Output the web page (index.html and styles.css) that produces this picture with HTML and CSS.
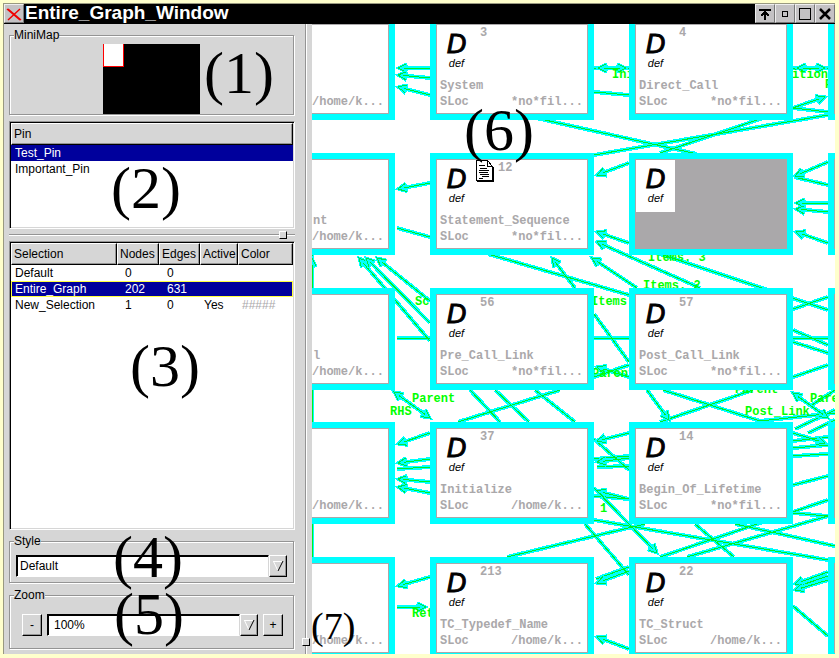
FILE: index.html
```html
<!DOCTYPE html>
<html lang="en">
<head>
<meta charset="utf-8">
<title>Entire_Graph_Window</title>
<link rel="stylesheet" href="styles.css">
</head>
<body>
<div class="window">
  <header class="titlebar">
    <button class="wm-button" aria-label="Window menu"><svg width="16" height="16" viewBox="0 0 16 16"><path d="M1 3L14 14M2 3L15 14M14 3L2 14" stroke="#f00000" stroke-width="1.5" fill="none"/></svg></button>
    <h1 class="title">Entire_Graph_Window</h1>
    <button class="wm-button" aria-label="Shade"><svg width="16" height="16" viewBox="0 0 16 16" shape-rendering="crispEdges"><path d="M2 4H14M8 4V14" stroke="#000" stroke-width="2" fill="none"/><path d="M4 10L8 6L12 10" stroke="#000" stroke-width="2" fill="none"/></svg></button>
    <button class="wm-button" aria-label="Minimize"><svg width="16" height="16" viewBox="0 0 16 16" shape-rendering="crispEdges"><path d="M5.500 5.500h5v5h-5z" stroke="#000" fill="none"/></svg></button>
    <button class="wm-button" aria-label="Maximize"><svg width="16" height="16" viewBox="0 0 16 16" shape-rendering="crispEdges"><path d="M2.500 2.500h11v11h-11z" stroke="#000" fill="none"/></svg></button>
    <button class="wm-button" aria-label="Close"><svg width="16" height="16" viewBox="0 0 16 16"><path d="M3 3L13 13M13 3L3 13" stroke="#000" stroke-width="2.500" fill="none"/></svg></button>
  </header>

  <div class="content">
    <aside class="sidebar">
      <fieldset class="group">
        <legend>MiniMap</legend>
        <div class="minimap"><div class="minimap-view"></div></div>
      </fieldset>

      <div class="list list-pins">
        <table>
          <thead><tr><th>Pin</th></tr></thead>
          <tbody>
            <tr class="selected"><td>Test_Pin</td></tr>
            <tr><td>Important_Pin</td></tr>
          </tbody>
        </table>
      </div>

      <div class="sash"><span class="grip"></span></div>

      <div class="list list-selections">
        <table>
          <colgroup><col class="c-name"><col class="c-nodes"><col class="c-edges"><col class="c-active"><col></colgroup>
          <thead><tr><th>Selection</th><th>Nodes</th><th>Edges</th><th>Active</th><th>Color</th></tr></thead>
          <tbody>
            <tr><td>Default</td><td class="value">0</td><td class="value">0</td><td></td><td></td></tr>
            <tr class="selected focused"><td>Entire_Graph</td><td class="value">202</td><td class="value">631</td><td></td><td></td></tr>
            <tr><td>New_Selection</td><td class="value">1</td><td class="value">0</td><td>Yes</td><td class="swatch">#####</td></tr>
          </tbody>
        </table>
      </div>

      <fieldset class="group group-style">
        <legend><label for="style">Style</label></legend>
        <div class="combo">
          <select id="style"><option>Default</option></select>
          <span class="arrow"><svg width="12" height="14" viewBox="0 0 12 14"><path d="M1 2.500H11M1.500 2.500L6 12" stroke="#fff" fill="none"/><path d="M11 2L6 12" stroke="#000" fill="none"/></svg></span>
        </div>
      </fieldset>

      <fieldset class="group group-zoom">
        <legend><label for="zoom">Zoom</label></legend>
        <div class="zoom-row">
          <button class="step" aria-label="Zoom out">-</button>
          <div class="combo">
            <select id="zoom"><option>100%</option></select>
            <span class="arrow"><svg width="12" height="14" viewBox="0 0 12 14"><path d="M1 2.500H11M1.500 2.500L6 12" stroke="#fff" fill="none"/><path d="M11 2L6 12" stroke="#000" fill="none"/></svg></span>
          </div>
          <button class="step" aria-label="Zoom in">+</button>
        </div>
      </fieldset>
    </aside>

    <div class="splitter"><span class="grip"></span></div>

    <main class="canvas">
      <svg class="edges" viewBox="312 24 523 630" width="523" height="630">
        <defs>
          <marker id="head" markerUnits="userSpaceOnUse" markerWidth="20" markerHeight="20" viewBox="-14 -10 20 20" refX="0" refY="0" orient="auto-start-reverse">
            <path d="M-9 -4L-1 0L-9 4" fill="none" stroke="#00ffff" stroke-width="4"/>
            <path d="M-8 -4L0 0L-8 4" fill="none" stroke="#00e840" stroke-width="1"/>
          </marker>
          <g id="links">
            <g class="lines">
              <path d="M397 228L430 237M397 338H430M397 469L430 467M536 118L697 154M594 155L828 115M793 108L828 112"/>
              <path d="M594 68H629M793 68H828M594 92L629 95M794 177L828 185M488 254L629 295M660 254L828 310M793 309L828 297"/>
              <path d="M793 330L828 345M793 342L828 353M594 338H629M793 338H828M594 314L629 362M793 377L828 365M594 377L629 365"/>
              <path d="M470 390L500 422M495 390L529 422M535 390L575 422M458 422L560 390M663 390L760 421L835 413M660 422L753 390"/>
              <path d="M795 429L835 410M808 433L835 420M812 405L835 390"/>
              <path d="M594 439L629 470M594 459L629 456M597 467L629 466M594 496L629 499M594 520L828 560M585 524L629 575"/>
              <path d="M507 557L645 524M660 557L828 500M687 557L828 516M695 524L734 557M735 524L835 546M793 513L828 516"/>
              <path d="M793 485L828 476M793 456L828 454M793 448L828 445M793 441L828 437M793 606L828 636M312 250V560"/>
              <path d="M596 579L629 567M796 587L828 576"/>
            </g>
            <g class="arrows">
              <path d="M430 68H398"/><path d="M430 78L398 75"/><path d="M430 95L398 87"/><path d="M430 183L398 189"/>
              <path d="M430 341L359 258"/><path d="M430 323L366 258"/><path d="M430 301L377 258"/>
              <path d="M430 433L398 444"/><path d="M430 459L398 463"/><path d="M430 482L398 479"/><path d="M430 493L398 487"/>
              <path d="M430 577L398 586"/><path d="M397 607H426"/>
              <path d="M660 153L825 97"/><path d="M629 163L597 175"/><path d="M828 162L795 176"/>
              <path d="M828 203H796"/><path d="M828 212L796 209"/><path d="M828 243L796 232"/><path d="M575 288L552 258"/>
              <path d="M629 243L597 232"/><path d="M700 288L597 242"/><path d="M637 288L592 258"/><path d="M629 377L597 367"/>
              <path d="M647 390L669 420"/><path d="M629 433L597 441"/><path d="M629 458L597 462"/><path d="M629 499L597 491"/>
              <path d="M594 488L657 553"/><path d="M629 571L597 583"/><path d="M629 649L597 637"/>
              <path d="M828 572L795 584"/><path d="M828 580L795 590"/><path d="M793 433L825 443"/><path d="M312 290V258"/>
            </g>
            <g class="arrows both">
              <path d="M394 392L430 418"/><path d="M598 68H626"/><path d="M797 68H825"/><path d="M793 393L828 418"/>
            </g>
          </g>
        </defs>
        <use href="#links" class="halo"/>
        <use href="#links" class="core"/>
        <g class="edge-labels">
          <text x="612" y="78">Ini</text><text x="792" y="78">ition</text><text x="825" y="88">P</text>
          <text x="415" y="305">Sc</text><text x="648" y="261">Items. 3</text><text x="643" y="289">Items. 2</text><text x="591" y="305">Items.</text>
          <text x="592" y="377">Parent</text><text x="412" y="402">Parent</text><text x="390" y="415">RHS</text>
          <text x="735" y="393">Parent</text><text x="810" y="402">Pare</text><text x="745" y="415">Post_Link</text>
          <text x="600" y="512">1</text><text x="412" y="617">Ret</text>
        </g>
      </svg>

      <article class="node col-1 row-1"><p class="name"></p><p class="sloc"><span>/home/k...</span></p></article>
      <article class="node col-1 row-2"><p class="name">nt</p><p class="sloc"><span>/home/k...</span></p></article>
      <article class="node col-1 row-3"><p class="name">l</p><p class="sloc"><span>/home/k...</span></p></article>
      <article class="node col-1 row-4"><p class="name"></p><p class="sloc"><span>/home/k...</span></p></article>
      <article class="node col-1 row-5"><p class="name"></p><p class="sloc"><span>/home/k...</span></p></article>

      <article class="node col-2 row-1"><div class="head"><div class="kind"><b>D</b><i>def</i></div><span class="num">3</span></div><p class="name">System</p><p class="sloc"><span>SLoc</span><span>*no*fil...</span></p></article>
      <article class="node col-2 row-2"><div class="head"><div class="kind"><b>D</b><i>def</i></div><svg class="doc" width="18" height="22" viewBox="0 0 18 22" shape-rendering="crispEdges"><path d="M0.500 0.500H11.500L16.500 6.500V20.500H0.500Z" fill="#fff" stroke="#000"/><path d="M17.500 7V21.500H1" fill="none" stroke="#000"/><path d="M11.500 1V6.500H17" fill="none" stroke="#000"/><path d="M3 5.500H9M4 8.500H11M3 10.500H13M3 12.500H12M4 14.500H13M6 16.500H13M3 18.500H7" stroke="#000"/></svg><span class="num">12</span></div><p class="name">Statement_Sequence</p><p class="sloc"><span>SLoc</span><span>*no*fil...</span></p></article>
      <article class="node col-2 row-3"><div class="head"><div class="kind"><b>D</b><i>def</i></div><span class="num">56</span></div><p class="name">Pre_Call_Link</p><p class="sloc"><span>SLoc</span><span>*no*fil...</span></p></article>
      <article class="node col-2 row-4"><div class="head"><div class="kind"><b>D</b><i>def</i></div><span class="num">37</span></div><p class="name">Initialize</p><p class="sloc"><span>SLoc</span><span>/home/k...</span></p></article>
      <article class="node col-2 row-5"><div class="head"><div class="kind"><b>D</b><i>def</i></div><span class="num">213</span></div><p class="name">TC_Typedef_Name</p><p class="sloc"><span>SLoc</span><span>/home/k...</span></p></article>

      <article class="node col-3 row-1"><div class="head"><div class="kind"><b>D</b><i>def</i></div><span class="num">4</span></div><p class="name">Direct_Call</p><p class="sloc"><span>SLoc</span><span>*no*fil...</span></p></article>
      <article class="node col-3 row-2 filled"><div class="head"><div class="kind"><b>D</b><i>def</i></div></div></article>
      <article class="node col-3 row-3"><div class="head"><div class="kind"><b>D</b><i>def</i></div><span class="num">57</span></div><p class="name">Post_Call_Link</p><p class="sloc"><span>SLoc</span><span>*no*fil...</span></p></article>
      <article class="node col-3 row-4"><div class="head"><div class="kind"><b>D</b><i>def</i></div><span class="num">14</span></div><p class="name">Begin_Of_Lifetime</p><p class="sloc"><span>SLoc</span><span>*no*fil...</span></p></article>
      <article class="node col-3 row-5"><div class="head"><div class="kind"><b>D</b><i>def</i></div><span class="num">22</span></div><p class="name">TC_Struct</p><p class="sloc"><span>SLoc</span><span>/home/k...</span></p></article>

      <article class="node col-4 row-1"></article>
      <article class="node col-4 row-2"></article>
      <article class="node col-4 row-3"></article>
      <article class="node col-4 row-4"></article>
      <article class="node col-4 row-5"></article>
    </main>
  </div>
</div>

<span class="callout callout-1">(1)</span>
<span class="callout callout-2">(2)</span>
<span class="callout callout-3">(3)</span>
<span class="callout callout-4">(4)</span>
<span class="callout callout-5">(5)</span>
<span class="callout callout-6">(6)</span>
<span class="callout callout-7">(7)</span>
</body>
</html>
```
FILE: styles.css
```css
* { box-sizing: border-box; }

body {
  margin: 0;
  background: #fff;
  color: #000;
  font: 12px/16px "Liberation Sans", sans-serif;
}

p, h1 { margin: 0; }

.window {
  display: flex;
  flex-direction: column;
  height: 100vh;
  border: 3px solid #ffffcc;
  border-bottom-width: 4px;
  border-right-width: 4px;
  box-shadow: inset 1px 1px 0 #999980;
  padding: 1px 0 0 1px;
  overflow: hidden;
}

/* Title bar */
.titlebar {
  display: flex;
  flex: none;
  height: 20px;
  background: #000;
}

.title {
  flex: 1;
  padding-left: 1px;
  color: #fff;
  font-size: 19px;
  line-height: 18px;
}

.wm-button {
  display: grid;
  place-items: center;
  width: 20px;
  height: 19px;
  padding: 0;
  background: #c4c2c4;
  border: 1px solid;
  border-color: #eee #777 #777 #eee;
}

.content {
  display: flex;
  flex: 1;
  min-height: 0;
}

/* Side panel */
.sidebar {
  display: flex;
  flex: none;
  flex-direction: column;
  width: 301px;
  padding: 4px 10px 5px 5px;
  background: #d6d6d6;
}

.group {
  flex: none;
  min-width: 0;
  margin: 0 1px 0 0;
  padding: 2px 4px 0;
  border: 1px solid #949494;
  box-shadow: 1px 1px 0 #fff, inset 1px 1px 0 #fff;
}

.group legend {
  padding: 0;
  background: #d6d6d6;
  line-height: 14px;
}

.minimap {
  width: 97px;
  height: 70px;
  margin: 0 auto;
  background: #000;
}

.minimap-view {
  width: 21px;
  height: 23px;
  background: #fff;
  border: 1px solid #f00;
  border-top: 0;
}

.list {
  background: #fff;
  border: 1px solid;
  border-color: #949494 #fff #fff #949494;
  box-shadow: inset 1px 1px 0 #000, inset -1px -1px 0 #d6d6d6;
  padding: 1px;
}

.list-pins {
  flex: none;
  height: 108px;
  margin-top: 6px;
}

.list-selections { flex: 1; }

.list table {
  width: 100%;
  table-layout: fixed;
  border-spacing: 0;
}

.list th {
  height: 22px;
  padding: 0 0 0 2px;
  overflow: hidden;
  background: #d6d6d6;
  border: 1px solid;
  border-color: #fff #000 #000 #fff;
  box-shadow: inset -1px -1px 0 #949494;
  font-weight: normal;
  text-align: left;
  white-space: nowrap;
}

.list td {
  height: 16px;
  padding: 0 0 0 4px;
}

.list .value { padding-left: 8px; }

.c-name { width: 106px; }
.c-nodes { width: 42px; }
.c-edges { width: 41px; }
.c-active { width: 38px; }

.selected {
  background: #00009c;
  color: #fff;
}

.focused {
  outline: 1px solid #ffff40;
  outline-offset: -1px;
}

.list .swatch { color: #aaa8aa; }

/* Pane dividers */
.sash {
  display: flex;
  flex: none;
  align-items: center;
  justify-content: flex-end;
  height: 12px;
  padding-right: 8px;
  background: linear-gradient(#949494, #949494) 0 5px / 100% 1px no-repeat,
    linear-gradient(#fff, #fff) 0 6px / 100% 1px no-repeat;
}

.grip {
  width: 8px;
  height: 8px;
  background: #d6d6d6;
  border: 1px solid;
  border-color: #fff #000 #000 #fff;
}

.splitter {
  display: flex;
  flex: none;
  align-items: flex-end;
  width: 7px;
  padding-bottom: 8px;
  background: linear-gradient(90deg, #949494 0 1px, #fff 1px 2px, #d6d6d6 2px);
}

.splitter .grip {
  flex: none;
  margin-left: -3px;
}

/* Combo boxes and buttons */
.group-style {
  height: 49px;
  margin-top: 4px;
  padding-top: 7px;
}

.group-zoom {
  height: 61px;
  margin-top: 5px;
  padding-top: 12px;
}

.combo {
  display: flex;
  flex: 1;
  height: 22px;
  padding: 0 2px;
}

.combo select {
  flex: 1;
  min-width: 0;
  height: 22px;
  padding: 0 3px;
  appearance: none;
  background: #fff;
  border: 1px solid;
  border-color: #000 #d6d6d6 #fff #000;
  box-shadow: inset 1px 1px 0 #000;
  border-radius: 0;
  color: #000;
  font: inherit;
}

.combo #zoom { padding-left: 6px; }

.arrow,
.step {
  display: grid;
  place-items: center;
  flex: none;
  width: 18px;
  height: 22px;
  padding: 0;
  background: #d6d6d6;
  border: 1px solid;
  border-color: #fff #000 #000 #fff;
  box-shadow: inset -1px -1px 0 #949494;
  font: inherit;
}

.zoom-row {
  display: flex;
  gap: 5px;
  padding: 0 6px 0 8px;
}

.zoom-row .combo { padding: 0; }

.step { width: 20px; }

/* Graph canvas */
.canvas {
  position: relative;
  flex: 1;
  overflow: hidden;
  background: #fff;
  color: #aaa8aa;
  font: bold 12px/16px "Liberation Mono", monospace;
}

.edges {
  position: absolute;
  left: 0;
  top: 0;
  shape-rendering: crispEdges;
}

.edges use { fill: none; }
.halo { stroke: #00ffff; stroke-width: 4px; }
.core { stroke: #00f020; stroke-width: 1px; }
.lines path { fill: none; }
.arrows path { fill: none; marker-end: url(#head); }
.both path { marker-start: url(#head); }
.edge-labels { fill: #00ff00; }

.node {
  position: absolute;
  display: flex;
  flex-direction: column;
  justify-content: flex-end;
  width: 164px;
  height: 102px;
  padding: 1px 5px 4px 1px;
  background: #fff;
  border: 6px solid #00ffff;
  box-shadow: inset 0 0 0 1px #aaa8aa;
}

/* The first column runs off the left edge of the view. */
.col-1 { left: 0; width: 83px; border-left: 0; box-shadow: inset -1px -1px 0 #aaa8aa, inset 0 1px 0 #aaa8aa; }
.col-2 { left: 118px; }
.col-3 { left: 317px; }
.col-4 { left: 516px; }
.row-1 { top: -6px; }
.row-2 { top: 129px; }
.row-3 { top: 264px; }
.row-4 { top: 398px; }
.row-5 { top: 533px; }

.filled { background: #aaa8aa; }

.head {
  display: flex;
  flex: none;
  height: 52px;
  margin-bottom: auto;
}

.kind {
  display: flex;
  flex-direction: column;
  align-items: center;
  width: 39px;
  padding-top: 6px;
  background: #fff;
  color: #000;
  font-family: "Liberation Sans", sans-serif;
  font-weight: normal;
}

.kind b {
  font-size: 27px;
  font-style: italic;
  font-weight: normal;
  line-height: 26px;
  -webkit-text-stroke: 1px #000;
}

.kind i { font-size: 11px; line-height: 12px; }

.num { padding-left: 4px; }

.name, .sloc {
  height: 16px;
  padding-left: 3px;
  white-space: nowrap;
}

.col-1 .name { padding-left: 0; }

.sloc {
  display: flex;
  justify-content: space-between;
}

.col-1 .sloc { justify-content: flex-end; }

/* Numbered callouts over the window */
.callout {
  position: absolute;
  color: #000;
  font: 60px/60px "Liberation Serif", serif;
  pointer-events: none;
}

.callout-1 { left: 204px; top: 43px; }
.callout-2 { left: 111px; top: 158px; }
.callout-3 { left: 130px; top: 336px; }
.callout-4 { left: 113px; top: 527px; }
.callout-5 { left: 114px; top: 584px; }
.callout-6 { left: 464px; top: 100px; }
.callout-7 { left: 311px; top: 607px; font-size: 38px; line-height: 38px; }
```
